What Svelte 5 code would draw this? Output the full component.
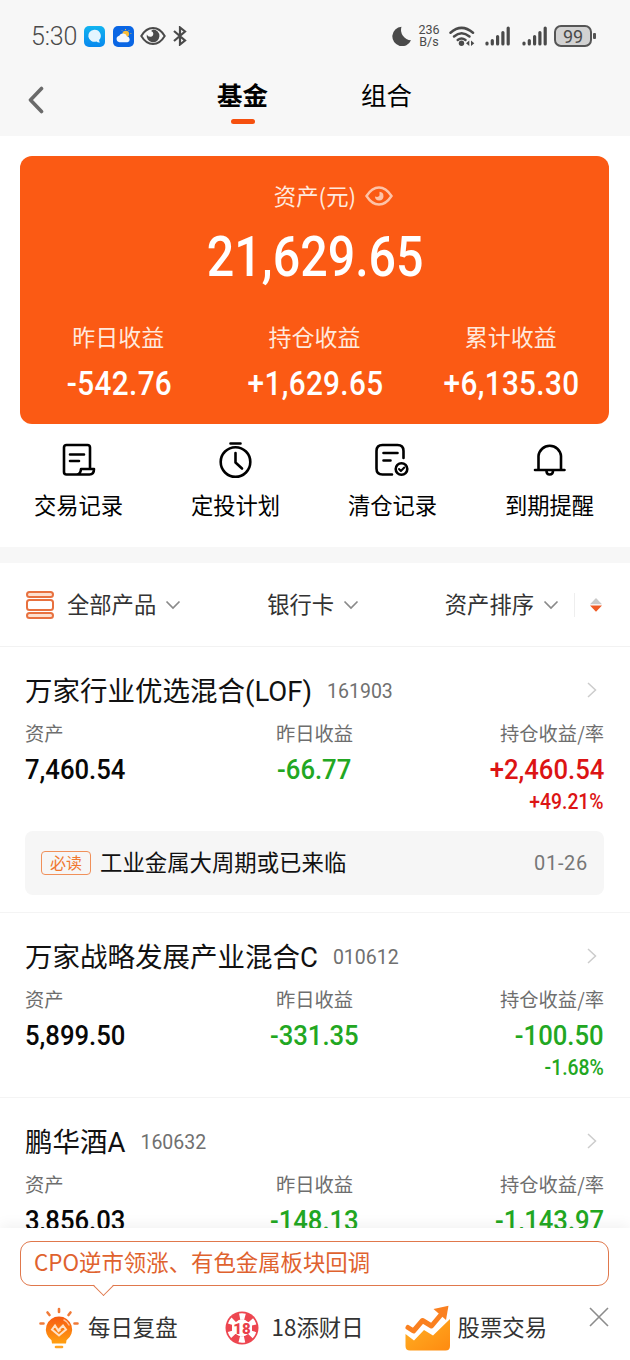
<script>
    const totals = [
        { label: "昨日收益", value: "-542.76" },
        { label: "持仓收益", value: "+1,629.65" },
        { label: "累计收益", value: "+6,135.30" },
    ];

    const actions = [
        { icon: "record", label: "交易记录" },
        { icon: "timer", label: "定投计划" },
        { icon: "cleared", label: "清仓记录" },
        { icon: "bell", label: "到期提醒" },
    ];

    const funds = [
        {
            name: "万家行业优选混合(LOF)",
            code: "161903",
            asset: "7,460.54",
            day: "-66.77",
            hold: "+2,460.54",
            rate: "+49.21%",
            news: { title: "工业金属大周期或已来临", date: "01-26" },
        },
        {
            name: "万家战略发展产业混合C",
            code: "010612",
            asset: "5,899.50",
            day: "-331.35",
            hold: "-100.50",
            rate: "-1.68%",
        },
        {
            name: "鹏华酒A",
            code: "160632",
            asset: "3,856.03",
            day: "-148.13",
            hold: "-1,143.97",
            rate: "",
        },
    ];

    function tone(value) {
        return value.startsWith("-") ? "down" : "up";
    }
</script>

{#snippet arrow()}
    <svg class="arrow" width="16" height="10" viewBox="0 0 16 10"><path d="M1.5 1.5L8 8L14.5 1.5" /></svg>
{/snippet}

{#snippet signal()}
    <svg width="26" height="22" viewBox="0 0 26 22" stroke="#4a4a4a" stroke-width="3.2" stroke-linecap="round">
        <path d="M2 18V19M7.3 15.5V19M12.6 11.5V19M17.9 7.5V19M23.2 3V19" />
    </svg>
{/snippet}

<div class="page">
    <header>
        <div class="status">
            <span class="clock">5:30</span>
            <svg class="chat" width="21" height="21" viewBox="0 0 21 21">
                <defs>
                    <linearGradient id="chat" x1="0" y1="0" x2="0" y2="1">
                        <stop offset="0" stop-color="#12b4f0" />
                        <stop offset="1" stop-color="#0788ee" />
                    </linearGradient>
                </defs>
                <rect width="21" height="21" rx="5" fill="url(#chat)" />
                <path d="M10.2 3.8a6.2 6 0 1 0 2.2 11.7q1.5 1.3 3.5 1q-.8-1.3-.8-2.6A6.2 6 0 0 0 10.2 3.8z" fill="#e4f5ff" />
            </svg>
            <svg class="weather" width="21" height="21" viewBox="0 0 21 21">
                <rect width="21" height="21" rx="5" fill="#0a66e4" />
                <circle cx="12.8" cy="8" r="3.3" fill="#f7bd3c" />
                <path d="M12.5 3V4M16 4.3L15.5 5M17.5 7.5H18.3M9 4.5L9.5 5.2" stroke="#f7bd3c" />
                <path d="M6.5 16.2a3.3 3.3 0 0 1-.3-6.5a4.3 4.3 0 0 1 7.8.8a2.9 2.9 0 0 1 .5 5.7z" fill="#f2f7ff" />
            </svg>
            <svg class="watch" width="26" height="20" viewBox="0 0 26 20">
                <path d="M1.3 10Q6 2 13 2T24.7 10Q20 18 13 18T1.3 10z" fill="none" stroke="#4a4a4a" stroke-width="2" />
                <path d="M13 3.5a6.4 6.4 0 1 1-6.2 5q1.200 2.600 3.800 2.300q2.800-.5 2.700-3.300q-.1-1.600-2.200-2.400z" fill="#4a4a4a" />
            </svg>
            <svg class="bt" width="14" height="20" viewBox="0 0 14 20" fill="none" stroke="#4a4a4a" stroke-width="2.2">
                <path d="M1 5L12 14.5L7 18.5V1.5L12 5.5L1 15" />
            </svg>
            <svg class="moon" width="20" height="20" viewBox="0 0 20 20">
                <path d="M9.5.8A9.7 9.7 0 1 0 19 14.2A10.3 10.3 0 0 1 9.5.8z" fill="#4a4a4a" />
            </svg>
            <div class="speed">
                <span>236</span>
                <span>B/s</span>
            </div>
            <svg class="wifi" width="26" height="21" viewBox="0 0 26 21">
                <g fill="none" stroke="#4a4a4a" stroke-width="2.5" stroke-linecap="round">
                    <path d="M1.5 6.7Q12.5-3 24 6.7" />
                    <path d="M5 10.5Q12.5 4 20.5 10.5" />
                    <path d="M8.7 14Q12.5 11 16.5 14" />
                </g>
                <circle cx="12.5" cy="17.3" r="2.7" fill="#4a4a4a" />
                <path d="M17 17.3L20.3 14.5V20zM25.3 17.3L22 14.5V20z" fill="#4a4a4a" />
            </svg>
            {@render signal()}
            {@render signal()}
            <div class="battery">99</div>
        </div>
        <nav>
            <svg class="back" width="16" height="28" viewBox="0 0 16 28">
                <path d="M13.5 2.5L2.5 14L13.5 25.5" fill="none" stroke="#6a6a6a" stroke-width="3.6" stroke-linecap="round" stroke-linejoin="round" />
            </svg>
            <span class="tab active">基金</span>
            <span class="tab">组合</span>
        </nav>
    </header>

    <main>
        <section class="card">
            <div class="caption">
                资产(元)
                <svg width="28" height="20" viewBox="0 0 28 20">
                    <path d="M1.5 10Q7 1.5 14 1.5T26.5 10Q21 18.5 14 18.5T1.5 10z" fill="none" stroke="#fdc3a8" stroke-width="2.4" />
                    <path d="M14.5 5.8a4.3 4.3 0 1 1-4.600 4.700q3.500 1.200 4.600-1z" fill="#fdc3a8" />
                </svg>
            </div>
            <div class="total"><span class="num">21,629.65</span></div>
            <div class="totals">
                {#each totals as item}
                <div>
                    <p>{item.label}</p>
                    <b class="num">{item.value}</b>
                </div>
                {/each}
            </div>
        </section>

        <section class="actions">
            {#each actions as action}
            <div>
                <svg width="36" height="38" viewBox="0 0 36 38">
                    {#if action.icon === "record"}
                    <path d="M29 26.5V6.5Q29 4 26.5 4H5.5Q3 4 3 6.5V31Q3 33.5 5.5 33.5H28.5Q33 33.5 33 28H20Q19.5 33.5 15.5 33.5" />
                    <path d="M9 13.5H23M9 20H18" />
                    {:else if action.icon === "timer"}
                    <circle cx="17.5" cy="21" r="14.8" />
                    <path d="M12.5 2.5H22.5M17.5 12V21.5L24 27.5" />
                    {:else if action.icon === "cleared"}
                    <path d="M28.5 17V10Q28.5 4 22.5 4H7.5Q1.5 4 1.5 10V27.5Q1.5 33.5 7.5 33.5H17" />
                    <path d="M8.5 12H22.5M8.5 19.5H15.5" />
                    <circle cx="26.5" cy="28" r="5.8" />
                    <path d="M24 28L25.9 30L29.3 26.5" stroke-width="2" />
                    {:else}
                    <path d="M6.5 28.5V15A11.3 11.3 0 0 1 29 15V28.5M3 29H32.5" />
                    <path d="M14.5 30Q14.5 33.5 17.7 33.5T21 30" />
                    {/if}
                </svg>
                <p>{action.label}</p>
            </div>
            {/each}
        </section>

        <section class="filters">
            <svg width="30" height="30" viewBox="0 0 30 30" fill="#fde0d0" stroke="#e8713f" stroke-width="2">
                <rect x="2" y="2" width="26" height="5" rx="2.5" />
                <rect x="2" y="10" width="26" height="10" rx="2.5" fill="#fff" />
                <rect x="2" y="23" width="26" height="5" rx="2.5" />
            </svg>
            <span class="product">全部产品 {@render arrow()}</span>
            <span class="bank">银行卡 {@render arrow()}</span>
            <span class="sort">资产排序 {@render arrow()}</span>
            <svg class="order" width="12" height="14" viewBox="0 0 12 14">
                <path d="M0 6.2L6 0L12 6.2z" fill="#c9c9c9" />
                <path d="M0 7.5L6 13.7L12 7.5z" fill="#ef5a24" />
            </svg>
        </section>

        {#each funds as fund}
        <article>
            <div class="title">
                <h2>{fund.name}</h2>
                <span>{fund.code}</span>
                <svg width="12" height="16" viewBox="0 0 12 16"><path d="M2 1L9.5 8L2 15" fill="none" stroke="#ccc" stroke-width="1.5" /></svg>
            </div>
            <div class="stats">
                <div>
                    <p>资产</p>
                    <b class="num">{fund.asset}</b>
                </div>
                <div>
                    <p>昨日收益</p>
                    <b class="num {tone(fund.day)}">{fund.day}</b>
                </div>
                <div>
                    <p>持仓收益/率</p>
                    <b class="num {tone(fund.hold)}">{fund.hold}</b>
                    <i class="num {tone(fund.rate)}">{fund.rate}</i>
                </div>
            </div>
            {#if fund.news}
            <div class="news">
                <em>必读</em>
                <span>{fund.news.title}</span>
                <time>{fund.news.date}</time>
            </div>
            {/if}
        </article>
        {/each}
    </main>

    <footer>
        <div class="bubble">CPO逆市领涨、有色金属板块回调</div>
        <div class="links">
            <svg class="bulb" width="42" height="42" viewBox="0 0 42 42">
                <defs>
                    <linearGradient id="bulb" x1="0" y1="0" x2="0" y2="1">
                        <stop offset="0" stop-color="#f75a12" />
                        <stop offset="1" stop-color="#ffa010" />
                    </linearGradient>
                </defs>
                <path d="M21 2V5M9.5 5.5L11.5 8M32.5 5.5L30.5 8M2.5 16.5H5.5M36.5 16.5H39.5" stroke="#f07a38" stroke-width="2.6" stroke-linecap="round" />
                <path d="M21 9.5A13 13 0 0 0 13.5 33.2L14 36.5H28L28.5 33.2A13 13 0 0 0 21 9.5z" fill="url(#bulb)" />
                <path d="M18 40H24" stroke="#ffa322" stroke-width="2.6" stroke-linecap="round" />
                <path d="M22.5 22.5L20.5 24L17 18.5L14 22.5L21 28.5L28 22.5L25 18.5L20.5 23" fill="none" stroke="#ffe1c6" stroke-width="2" />
                <path d="M26 13Q29.5 14.5 31 18" fill="none" stroke="#ffc39a" stroke-width="1.5" stroke-linecap="round" />
            </svg>
            <span>每日复盘</span>
            <svg class="chip" width="34" height="34" viewBox="0 0 34 34">
                <circle cx="17" cy="17" r="16.5" fill="#ed4650" />
                <circle cx="17" cy="17" r="11.5" fill="none" stroke="#fff" stroke-width="6.5" stroke-dasharray="5.4 6.643" stroke-dashoffset="-3.3" />
                <circle cx="17" cy="17" r="8.5" fill="#fff" />
                <rect x="7" y="11" width="20" height="12" fill="#fff" />
                <text x="17" y="22.500" text-anchor="middle">18</text>
            </svg>
            <span>18添财日</span>
            <svg class="chart" width="48" height="46" viewBox="0 0 48 46">
                <defs>
                    <linearGradient id="chart" x1="0" y1="0" x2="1" y2="1">
                        <stop offset="0" stop-color="#ffb224" />
                        <stop offset="1" stop-color="#ff8a10" />
                    </linearGradient>
                </defs>
                <path d="M1.5 29L10 35.5L20 25L29 30.5L46 14V41Q46 45.5 41.5 45.5H6Q1.5 45.5 1.5 41z" fill="url(#chart)" />
                <path d="M4 22.5L9.5 26L18.5 15.5L27.5 21L38 8.5" fill="none" stroke="#fa8020" stroke-width="5" stroke-linecap="round" stroke-linejoin="round" />
                <path d="M29.5 4L44.5.8L42 15z" fill="#fa8020" />
            </svg>
            <span>股票交易</span>
            <svg class="close" width="20" height="20" viewBox="0 0 20 20"><path d="M1 1L19 19M19 1L1 19" stroke="#8c8c8c" stroke-width="1.6" /></svg>
        </div>
    </footer>
</div>

<style>
    .page {
        display: flex;
        flex-direction: column;
        width: 630px;
        height: 1360px;
        overflow: hidden;
        background-color: #FFF;
        color: #080808;
        font-family: "Noto Sans CJK SC", sans-serif;
    }

    p, h2 {
        margin: 0;
        font-weight: 400;
    }

    svg {
        display: block;
        flex: none;
    }

    /* amounts are set in a narrow face */
    .num {
        display: inline-block;
        font-family: Roboto, sans-serif;
        font-style: normal;
        font-weight: 500;
        white-space: nowrap;
        transform: scaleX(0.9);
    }

    header {
        flex: none;
        height: 136px;
        background-color: #F7F7F7;
    }

    .status {
        display: flex;
        align-items: center;
        height: 72px;
        padding: 0 38px 0 31px;
        color: #4A4A4A;
        font-family: Roboto, sans-serif;
    }

    .clock {
        width: 53px;
        padding-top: 1px;
        font-size: 25px;
        font-weight: 300;
        letter-spacing: -0.2px;
    }

    .weather {
        margin-left: 8px;
    }

    .watch {
        margin-left: 6px;
    }

    .bt {
        margin-left: 7px;
    }

    .moon {
        margin-left: auto;
    }

    .speed {
        display: flex;
        flex-direction: column;
        align-items: center;
        width: 24px;
        margin: 0 8px 0 5px;
        font-size: 12.5px;
        line-height: 12px;
    }

    .wifi {
        margin-right: 10px;
    }

    .wifi + svg {
        margin-right: 11px;
    }

    .battery {
        position: relative;
        box-sizing: border-box;
        width: 38px;
        height: 22px;
        margin-left: 6px;
        border: 2px solid #555;
        border-radius: 7px;
        background-color: #D2D2D2;
        font-size: 18px;
        line-height: 19px;
        text-align: center;
    }

    .battery::after {
        content: "";
        position: absolute;
        top: 6px;
        right: -6px;
        width: 3px;
        height: 6px;
        border-radius: 1px;
        background-color: #555;
    }

    nav {
        display: flex;
        height: 64px;
    }

    .back {
        margin: 14px 172px 0 28px;
    }

    .tab {
        position: relative;
        width: 52px;
        margin-right: 92px;
        font-size: 25.5px;
        line-height: 43px;
        color: #000;
    }

    .back + .tab {
        margin-left: 1px;
    }

    .active {
        font-weight: 700;
    }

    .active::after {
        content: "";
        position: absolute;
        left: 14px;
        top: 47px;
        width: 24px;
        height: 5px;
        border-radius: 3px;
        background-color: #F5500F;
    }

    main {
        flex: 1;
        min-height: 0;
        overflow: hidden;
    }

    .card {
        box-sizing: border-box;
        height: 268px;
        margin: 20px 21px 0 20px;
        padding-top: 22px;
        border-radius: 12px;
        background-color: #FB5A14;
        color: #FFF;
    }

    .caption {
        display: flex;
        align-items: center;
        justify-content: center;
        gap: 9px;
        height: 33px;
        padding-left: 38px;
        font-size: 22.4px;
        color: #FFE9DD;
    }

    .caption svg {
        margin-top: 3px;
    }

    .total {
        height: 89px;
        padding-left: 2px;
        line-height: 82px;
        text-align: center;
        font-size: 55px;
    }

    .total .num {
        transform: scaleX(0.88);
    }

    .totals {
        display: grid;
        grid-template-columns: repeat(3, 1fr);
        padding-top: 18px;
        text-align: center;
    }

    .totals p {
        height: 40px;
        font-size: 23px;
        line-height: 37px;
        color: #FFE9DD;
    }

    .totals b {
        margin-left: 2px;
        font-size: 33px;
        letter-spacing: 0.4px;
        line-height: 52px;
    }

    .actions {
        display: grid;
        grid-template-columns: repeat(4, 157px);
        height: 123px;
        border-bottom: 16px solid #F7F7F7;
    }

    .actions div {
        display: flex;
        flex-direction: column;
        align-items: center;
        padding-top: 17px;
    }

    .actions svg {
        fill: none;
        stroke: #000;
        stroke-width: 2.6;
        stroke-linecap: round;
        stroke-linejoin: round;
    }

    .actions p {
        margin-top: 8px;
        font-size: 22.3px;
        line-height: 35px;
        color: #000;
    }

    .filters {
        display: flex;
        align-items: center;
        height: 83px;
        padding: 0 28px 0 25px;
        border-bottom: 1px solid #F2F2F2;
        font-size: 22.3px;
        color: #333;
    }

    .filters span {
        display: flex;
        align-items: center;
        gap: 9px;
        padding-bottom: 3px;
    }

    .arrow {
        margin-top: 3px;
        fill: none;
        stroke: #8A8A8A;
        stroke-width: 1.7;
    }

    .product {
        margin-left: 12px;
    }

    .bank {
        margin-left: 86px;
    }

    .sort {
        margin-left: auto;
        padding-right: 15px;
    }

    .order {
        box-sizing: content-box;
        padding: 5px 0 5px 15px;
        border-left: 1px solid #EEE;
    }

    article {
        padding: 26px 26px 15px 25px;
        border-bottom: 1px solid #F4F4F4;
    }

    .title {
        display: flex;
        align-items: center;
        height: 36px;
        margin-bottom: 9px;
    }

    h2 {
        padding-top: 2px;
        font-family: Roboto, "Noto Sans CJK SC", sans-serif;
        font-size: 27.5px;
        line-height: 36px;
        color: #111;
    }

    .title span {
        margin-left: 15px;
        font-family: Roboto, sans-serif;
        font-size: 19.5px;
        color: #707070;
    }

    .title svg {
        margin: -2px 6px 0 auto;
    }

    .stats {
        display: grid;
        grid-template-columns: repeat(3, 1fr);
        height: 98px;
    }

    .stats div {
        display: flex;
        flex-direction: column;
        align-items: flex-start;
    }

    .stats div:nth-child(2) {
        align-items: center;
    }

    .stats div:nth-child(3) {
        align-items: flex-end;
    }

    .stats p {
        margin-bottom: 3px;
        font-size: 19.3px;
        line-height: 30px;
        color: #6E6E6E;
    }

    .stats b {
        font-size: 28.5px;
        line-height: 38px;
        transform-origin: left;
    }

    .stats div:nth-child(2) b {
        transform-origin: center;
    }

    .stats div:nth-child(3) .num {
        transform-origin: right;
    }

    .stats i {
        margin-top: -1px;
        font-size: 21.5px;
        line-height: 28px;
    }

    .up {
        color: #DC1414;
    }

    .down {
        color: #22A722;
    }

    .news {
        display: flex;
        align-items: center;
        height: 64px;
        margin: 15px 0 2px;
        padding: 0 16px;
        border-radius: 8px;
        background-color: #F6F6F6;
        font-size: 22.4px;
        color: #111;
    }

    .news span {
        padding-bottom: 4px;
    }

    .news em {
        box-sizing: border-box;
        width: 50px;
        height: 24px;
        margin-right: 9px;
        border: 1px solid #F0905A;
        border-radius: 4px;
        font-size: 16px;
        font-style: normal;
        line-height: 20px;
        text-align: center;
        color: #F0782F;
    }

    .news time {
        margin-left: auto;
        font-family: Roboto, sans-serif;
        font-size: 20px;
        letter-spacing: 0.7px;
        color: #777;
    }

    footer {
        position: relative;
        flex: none;
        box-sizing: border-box;
        height: 132px;
        padding: 13px 21px 0 20px;
        background-color: #FFF;
        box-shadow: 0 -4px 12px #0000000D;
    }

    .bubble {
        position: relative;
        box-sizing: border-box;
        height: 45px;
        padding-left: 13px;
        border: 1px solid #E0784C;
        border-radius: 11px;
        font-size: 22.4px;
        line-height: 39px;
        color: #DF622E;
    }

    .bubble::after {
        content: "";
        position: absolute;
        left: 75px;
        bottom: -8px;
        width: 14px;
        height: 14px;
        border-right: 1px solid #E0784C;
        border-bottom: 1px solid #E0784C;
        background: linear-gradient(135deg, #FFF0 50%, #FFF 50%);
        transform: rotate(45deg);
    }

    .links {
        display: flex;
        align-items: center;
        height: 84px;
        font-size: 22.4px;
        color: #333;
    }

    .links span {
        padding-bottom: 4px;
    }

    .bulb {
        margin: 0 8px 0 18px;
    }

    .chip {
        margin: 0 13px 0 47px;
    }

    .chip text {
        font: 900 15px Roboto, sans-serif;
        fill: #E93F49;
    }

    .chart {
        margin: 0 6px 0 40px;
    }

    .close {
        margin: -22px 0 0 auto;
    }
</style>
